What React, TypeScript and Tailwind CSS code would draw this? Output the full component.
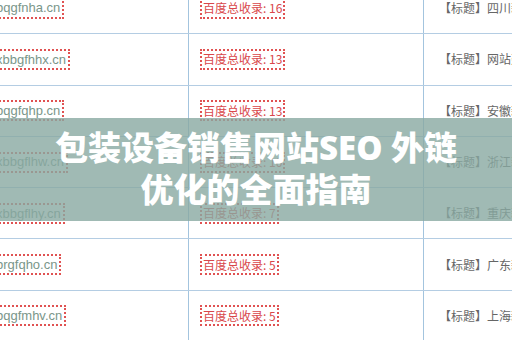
const rows = [
  { domain: "bqgfnha.cn", count: 16, title: "四川新闻网站建设" },
  { domain: "xbbgfhhx.cn", count: 13, title: "网站建设优化" },
  { domain: "bqgfqhp.cn", count: 13, title: "安徽新闻网站" },
  { domain: "xbbgflhw.cn", count: 10, title: "浙江新闻网站" },
  { domain: "xbbgflhy.cn", count: 7, title: "重庆新闻网站" },
  { domain: "brgfqho.cn", count: 5, title: "广东新闻网站" },
  { domain: "bqgfmhv.cn", count: 5, title: "上海新闻网站" },
];

const cjk = "font-['Noto_Sans_CJK_SC',sans-serif]";

export default function App() {
  return (
    <div className="relative w-[512px] h-[340px] overflow-hidden bg-white">
      <div className="-mt-[17px] -ml-[19px] flex flex-col">
        {rows.map((row) => (
          <div
            key={row.domain}
            className="grid grid-cols-[208px_235px_1fr] h-[51.3px] shrink-0 border-b border-[#b4cde3]"
          >
            <div className="flex items-center pl-[11px] border-r border-[#a3c4de]">
              <span className="border-2 border-dotted border-[#e05252] px-[2px] h-[21px] flex items-center font-['Liberation_Sans',sans-serif] text-[13px] text-[#7a968a] whitespace-nowrap">
                {row.domain}
              </span>
            </div>
            <div className="flex items-center pl-[11px] border-r border-[#a3c4de]">
              <span className={`border-2 border-dotted border-[#e05252] px-[1px] h-[21px] flex items-center ${cjk} text-[12px] text-[#d9474b] whitespace-nowrap`}>
                百度总收录: {row.count}
              </span>
            </div>
            <div className={`flex items-center pl-[15px] ${cjk} text-[12px] text-[#666666] whitespace-nowrap`}>
              【标题】{row.title}
            </div>
          </div>
        ))}
      </div>

      <div className="absolute inset-x-0 top-[118px] h-[103px] bg-[#88a9a1]/80 flex items-center justify-center px-[46px] pb-[2px]">
        <h1 className="text-center text-white font-black text-[33px] leading-[42px] font-['Open_Sans','Noto_Sans_CJK_SC',sans-serif]">
          包装设备销售网站SEO 外链优化的全面指南
        </h1>
      </div>
    </div>
  );
}
